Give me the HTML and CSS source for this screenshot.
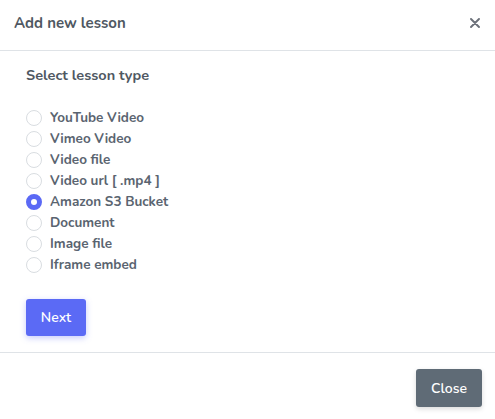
FILE: index.html
```html
<!DOCTYPE html>
<html>
<head>
<meta charset="utf-8">
<link rel="stylesheet" href="styles.css">
</head>
<body>
<div class="modal">
  <div class="modal-header">
    <h5 class="modal-title">Add new lesson</h5>
    <button class="close" aria-label="Close"><svg width="10" height="10" viewBox="0 0 10 10"><path d="M1 1L9 9M9 1L1 9" stroke="#6b7079" stroke-width="1.9" stroke-linecap="round"/></svg></button>
  </div>
  <div class="modal-body">
    <h6 class="section-title">Select lesson type</h6>
    <div class="radio-list">
      <label class="radio"><span class="dot"></span><span>YouTube Video</span></label>
      <label class="radio"><span class="dot"></span><span>Vimeo Video</span></label>
      <label class="radio"><span class="dot"></span><span>Video file</span></label>
      <label class="radio"><span class="dot"></span><span>Video url [ .mp4 ]</span></label>
      <label class="radio checked"><span class="dot"></span><span>Amazon S3 Bucket</span></label>
      <label class="radio"><span class="dot"></span><span>Document</span></label>
      <label class="radio"><span class="dot"></span><span>Image file</span></label>
      <label class="radio"><span class="dot"></span><span>Iframe embed</span></label>
    </div>
    <button class="btn btn-primary">Next</button>
  </div>
  <div class="modal-footer">
    <button class="btn btn-secondary">Close</button>
  </div>
</div>
</body>
</html>
```
FILE: styles.css
```css
* { box-sizing: border-box; }
body {
  margin: 0;
  background: #fff;
  font-family: "Nunito", Lato, "Noto Sans", sans-serif;
  color: #5a6470;
}
.modal {
  width: 495px;
  height: 419px;
  display: flex;
  flex-direction: column;
}
.modal-header {
  display: flex;
  align-items: center;
  justify-content: space-between;
  padding: 12px 15px 16px 14px;
  border-bottom: 1px solid #dfe3e7;
}
.modal-title {
  margin: 0;
  font-size: 15px;
  line-height: 22px;
  font-weight: 700;
  color: #4f5862;
}
.close {
  border: 0;
  background: none;
  padding: 0;
  width: 10px;
  height: 10px;
  display: flex;
  cursor: pointer;
}
.modal-body {
  padding: 14px 26px 16px 26px;
  display: flex;
  flex-direction: column;
  align-items: flex-start;
}
.section-title {
  margin: 0 0 22px 0;
  font-size: 14.5px;
  line-height: 20px;
  font-weight: 700;
  color: #4f5862;
}
.radio-list {
  display: flex;
  flex-direction: column;
  margin-bottom: 24px;
}
.radio {
  display: flex;
  align-items: center;
  height: 21px;
  font-size: 13.5px;
  font-weight: 700;
  color: #5a6470;
}
.dot {
  width: 16px;
  height: 16px;
  border-radius: 50%;
  border: 1px solid #d9dde1;
  background: #fff;
  margin-right: 8px;
  flex: none;
}
.radio.checked .dot {
  border: 5px solid #5b69f5;
  background: #fff;
}
.btn {
  border: 0;
  border-radius: 3px;
  font-family: inherit;
  font-size: 14px;
  font-weight: 600;
  color: #fff;
  cursor: pointer;
}
.btn-primary {
  width: 60px;
  height: 37px;
  background: #5b6af5;
  box-shadow: 0 2px 6px rgba(91, 106, 245, 0.35);
}
.modal-footer {
  border-top: 1px solid #dfe3e7;
  display: flex;
  justify-content: flex-end;
  padding: 16px 13px 12px 13px;
}
.btn-secondary {
  width: 66px;
  height: 38px;
  background: #5f6b76;
  box-shadow: 0 2px 5px rgba(0, 0, 0, 0.15);
}
```
